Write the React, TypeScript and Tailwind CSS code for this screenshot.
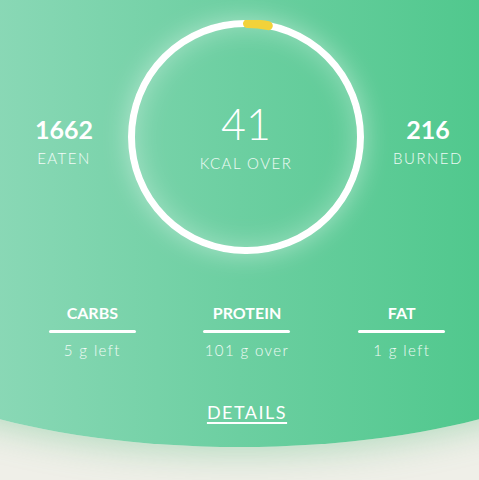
import React from "react";

const macros = [
  { name: "CARBS", sub: "5 g left" },
  { name: "PROTEIN", sub: "101 g over" },
  { name: "FAT", sub: "1 g left" },
];

export default function App() {
  return (
    <div
      className="h-[480px] w-[479px] overflow-hidden bg-[#efefe8] text-white"
      style={{ fontFamily: "Lato, 'Open Sans', sans-serif" }}
    >
      <div className="mx-[-144px] h-[447px] rounded-b-[50%_127px] bg-[linear-gradient(90deg,#8ad8b6_18%,#6ccfa1_50%,#50c88d_82%)] shadow-[0_6px_34px_rgba(90,190,130,0.4)]">
        <div className="mx-auto w-[479px]">
          <div className="grid grid-cols-[128px_236px_128px] pt-[20px]">
            <div className="flex flex-col items-center pt-[94px]">
              <div className="text-[25px] font-bold leading-[30px]">1662</div>
              <div className="mt-[4px] text-[15px] font-light leading-[20px] tracking-[1.5px] text-white/90">EATEN</div>
            </div>
            <div className="relative h-[234px] w-[236px] rounded-full border-[7px] border-white shadow-[0_0_26px_rgba(255,255,255,0.45),inset_0_0_28px_rgba(255,255,255,0.35)]">
              <svg
                className="absolute left-[-7px] top-[-7px]"
                width="236"
                height="234"
                viewBox="0 0 236 234"
              >
                <path
                  d="M119.5 3.6 A114.5 113.5 0 0 1 140.3 5.7"
                  fill="none"
                  stroke="#f2d23a"
                  strokeWidth="9"
                  strokeLinecap="round"
                />
              </svg>
              <div className="flex flex-col items-center pt-[75px]">
                <div className="text-[43px] font-light leading-[44px]">41</div>
                <div className="mt-[7px] text-[15px] font-light leading-[20px] tracking-[1.5px] text-white/90">KCAL OVER</div>
              </div>
            </div>
            <div className="flex flex-col items-center pt-[94px]">
              <div className="text-[25px] font-bold leading-[30px]">216</div>
              <div className="mt-[4px] text-[15px] font-light leading-[20px] tracking-[1.5px] text-white/90">BURNED</div>
            </div>
          </div>

          <div className="mt-[48px] grid grid-cols-3 pl-[15px]">
            {macros.map((m) => (
              <div key={m.name} className="flex flex-col items-center">
                <div className="text-[16px] font-bold leading-[22px]">{m.name}</div>
                <div className="mt-[6px] h-[3px] w-[87px] rounded-full bg-white" />
                <div className="mt-[7px] text-[15px] font-light leading-[20px] tracking-[1.4px] text-white/90">{m.sub}</div>
              </div>
            ))}
          </div>

          <div className="mt-[40px] flex justify-center pl-[15px]">
            <span className="text-[18px] leading-[24px] tracking-[1.5px] underline decoration-[1.5px] underline-offset-[3px]">
              DETAILS
            </span>
          </div>
        </div>
      </div>
    </div>
  );
}
